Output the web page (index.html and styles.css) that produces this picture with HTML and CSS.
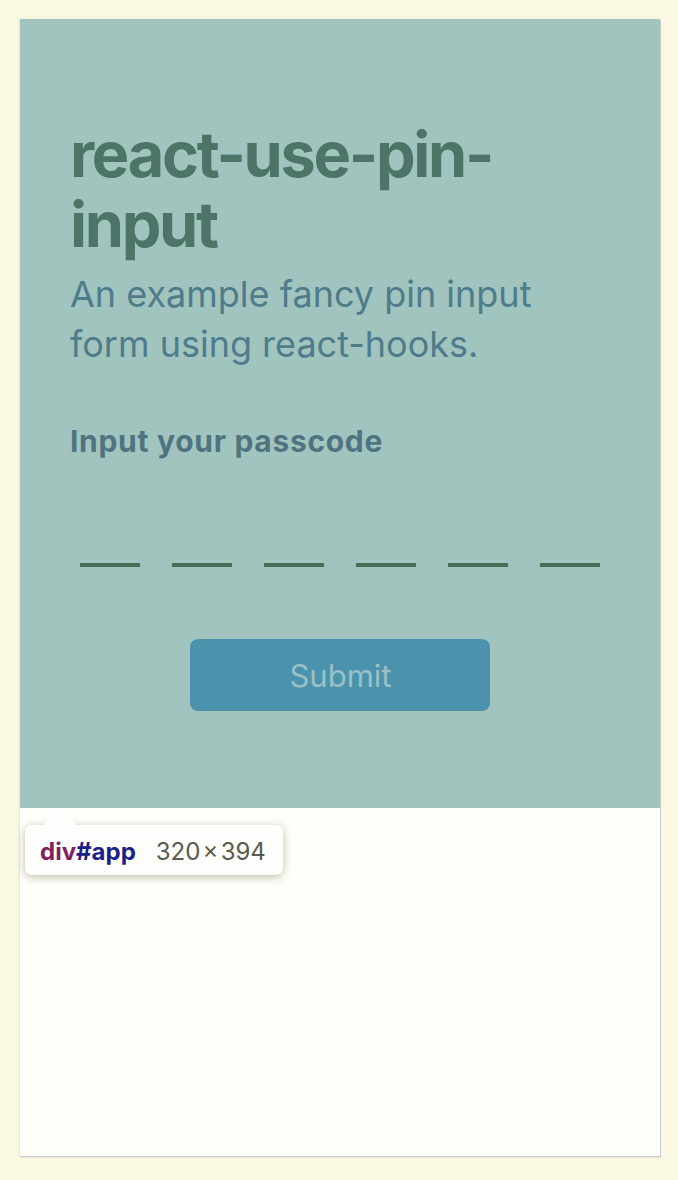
FILE: index.html
```html
<!DOCTYPE html>
<html lang="en">
<head>
<meta charset="utf-8">
<title>react-use-pin-input</title>
<link rel="stylesheet" href="styles.css">
</head>
<body>
<div class="frame">
  <div class="app" id="app">
    <h1 class="title">react-use-pin-input</h1>
    <p class="subtitle">An example fancy pin input form using react-hooks.</p>
    <form class="form">
      <label class="label">Input your passcode</label>
      <div class="pins">
        <span class="pin"></span>
        <span class="pin"></span>
        <span class="pin"></span>
        <span class="pin"></span>
        <span class="pin"></span>
        <span class="pin"></span>
      </div>
      <div class="actions">
        <button type="button" class="submit">Submit</button>
      </div>
    </form>
  </div>
  <div class="tooltip">
    <span class="tag"><span class="tag-name">div</span><span class="tag-id">#app</span></span>
    <span class="dims">320&#8202;×&#8202;394</span>
  </div>
</div>
</body>
</html>
```
FILE: styles.css
```css
html, body {
  margin: 0;
  padding: 0;
}
body {
  background: #faf8e2;
  font-family: Inter, "Noto Sans", sans-serif;
  width: 678px;
  height: 1180px;
  overflow: hidden;
}
.frame {
  position: relative;
  margin: 19px 0 0 20px;
  width: 640px;
  height: 1137px;
  background: #fefefa;
  box-shadow: 1px 1px 0 #c9c9d2, 0 1px 2px rgba(120, 120, 140, 0.35);
}
.app {
  box-sizing: border-box;
  height: 789px;
  padding: 100px 50px 0 50px;
  background: #a2c4bf;
}
.title {
  margin: 0;
  font-size: 63px;
  line-height: 70px;
  font-weight: 700;
  letter-spacing: -2.3px;
  color: #4e7468;
}
.subtitle {
  margin: 10px 0 0 0;
  font-size: 36px;
  line-height: 50px;
  font-weight: 400;
  color: #4f7c8a;
}
.form {
  display: flex;
  flex-direction: column;
  margin-top: 54px;
}
.label {
  font-size: 30px;
  line-height: 36px;
  font-weight: 700;
  letter-spacing: 0.7px;
  color: #4f7480;
}
.pins {
  display: flex;
  justify-content: center;
  gap: 32px;
  margin-top: 48px;
}
.pin {
  display: block;
  width: 60px;
  height: 56px;
  border-bottom: 4px solid #4b6d58;
}
.actions {
  display: flex;
  justify-content: center;
  margin-top: 72px;
}
.submit {
  width: 300px;
  height: 72px;
  border: none;
  border-radius: 8px;
  background: #4b93ad;
  color: #9ac0c6;
  font-family: Inter, "Noto Sans", sans-serif;
  font-size: 31px;
  font-weight: 400;
  padding: 0 0 0 1px;
}
.tooltip {
  position: absolute;
  left: 5px;
  top: 806px;
  box-sizing: border-box;
  width: 258px;
  height: 50px;
  padding: 2px 15px 0 15px;
  display: flex;
  align-items: center;
  gap: 20px;
  background: #fefefc;
  border-radius: 7px;
  box-shadow: 0 2px 9px rgba(110, 110, 60, 0.45);
  font-size: 24px;
}
.tooltip::before {
  content: "";
  position: absolute;
  left: 19px;
  top: -17px;
  width: 0;
  height: 0;
  border-left: 16px solid transparent;
  border-right: 16px solid transparent;
  border-bottom: 17px solid #fefefc;
}
.tag {
  font-weight: 700;
}
.tag-name {
  color: #80205f;
}
.tag-id {
  color: #1c1f8a;
}
.dims {
  color: #5a5a4e;
  font-weight: 400;
}
```
